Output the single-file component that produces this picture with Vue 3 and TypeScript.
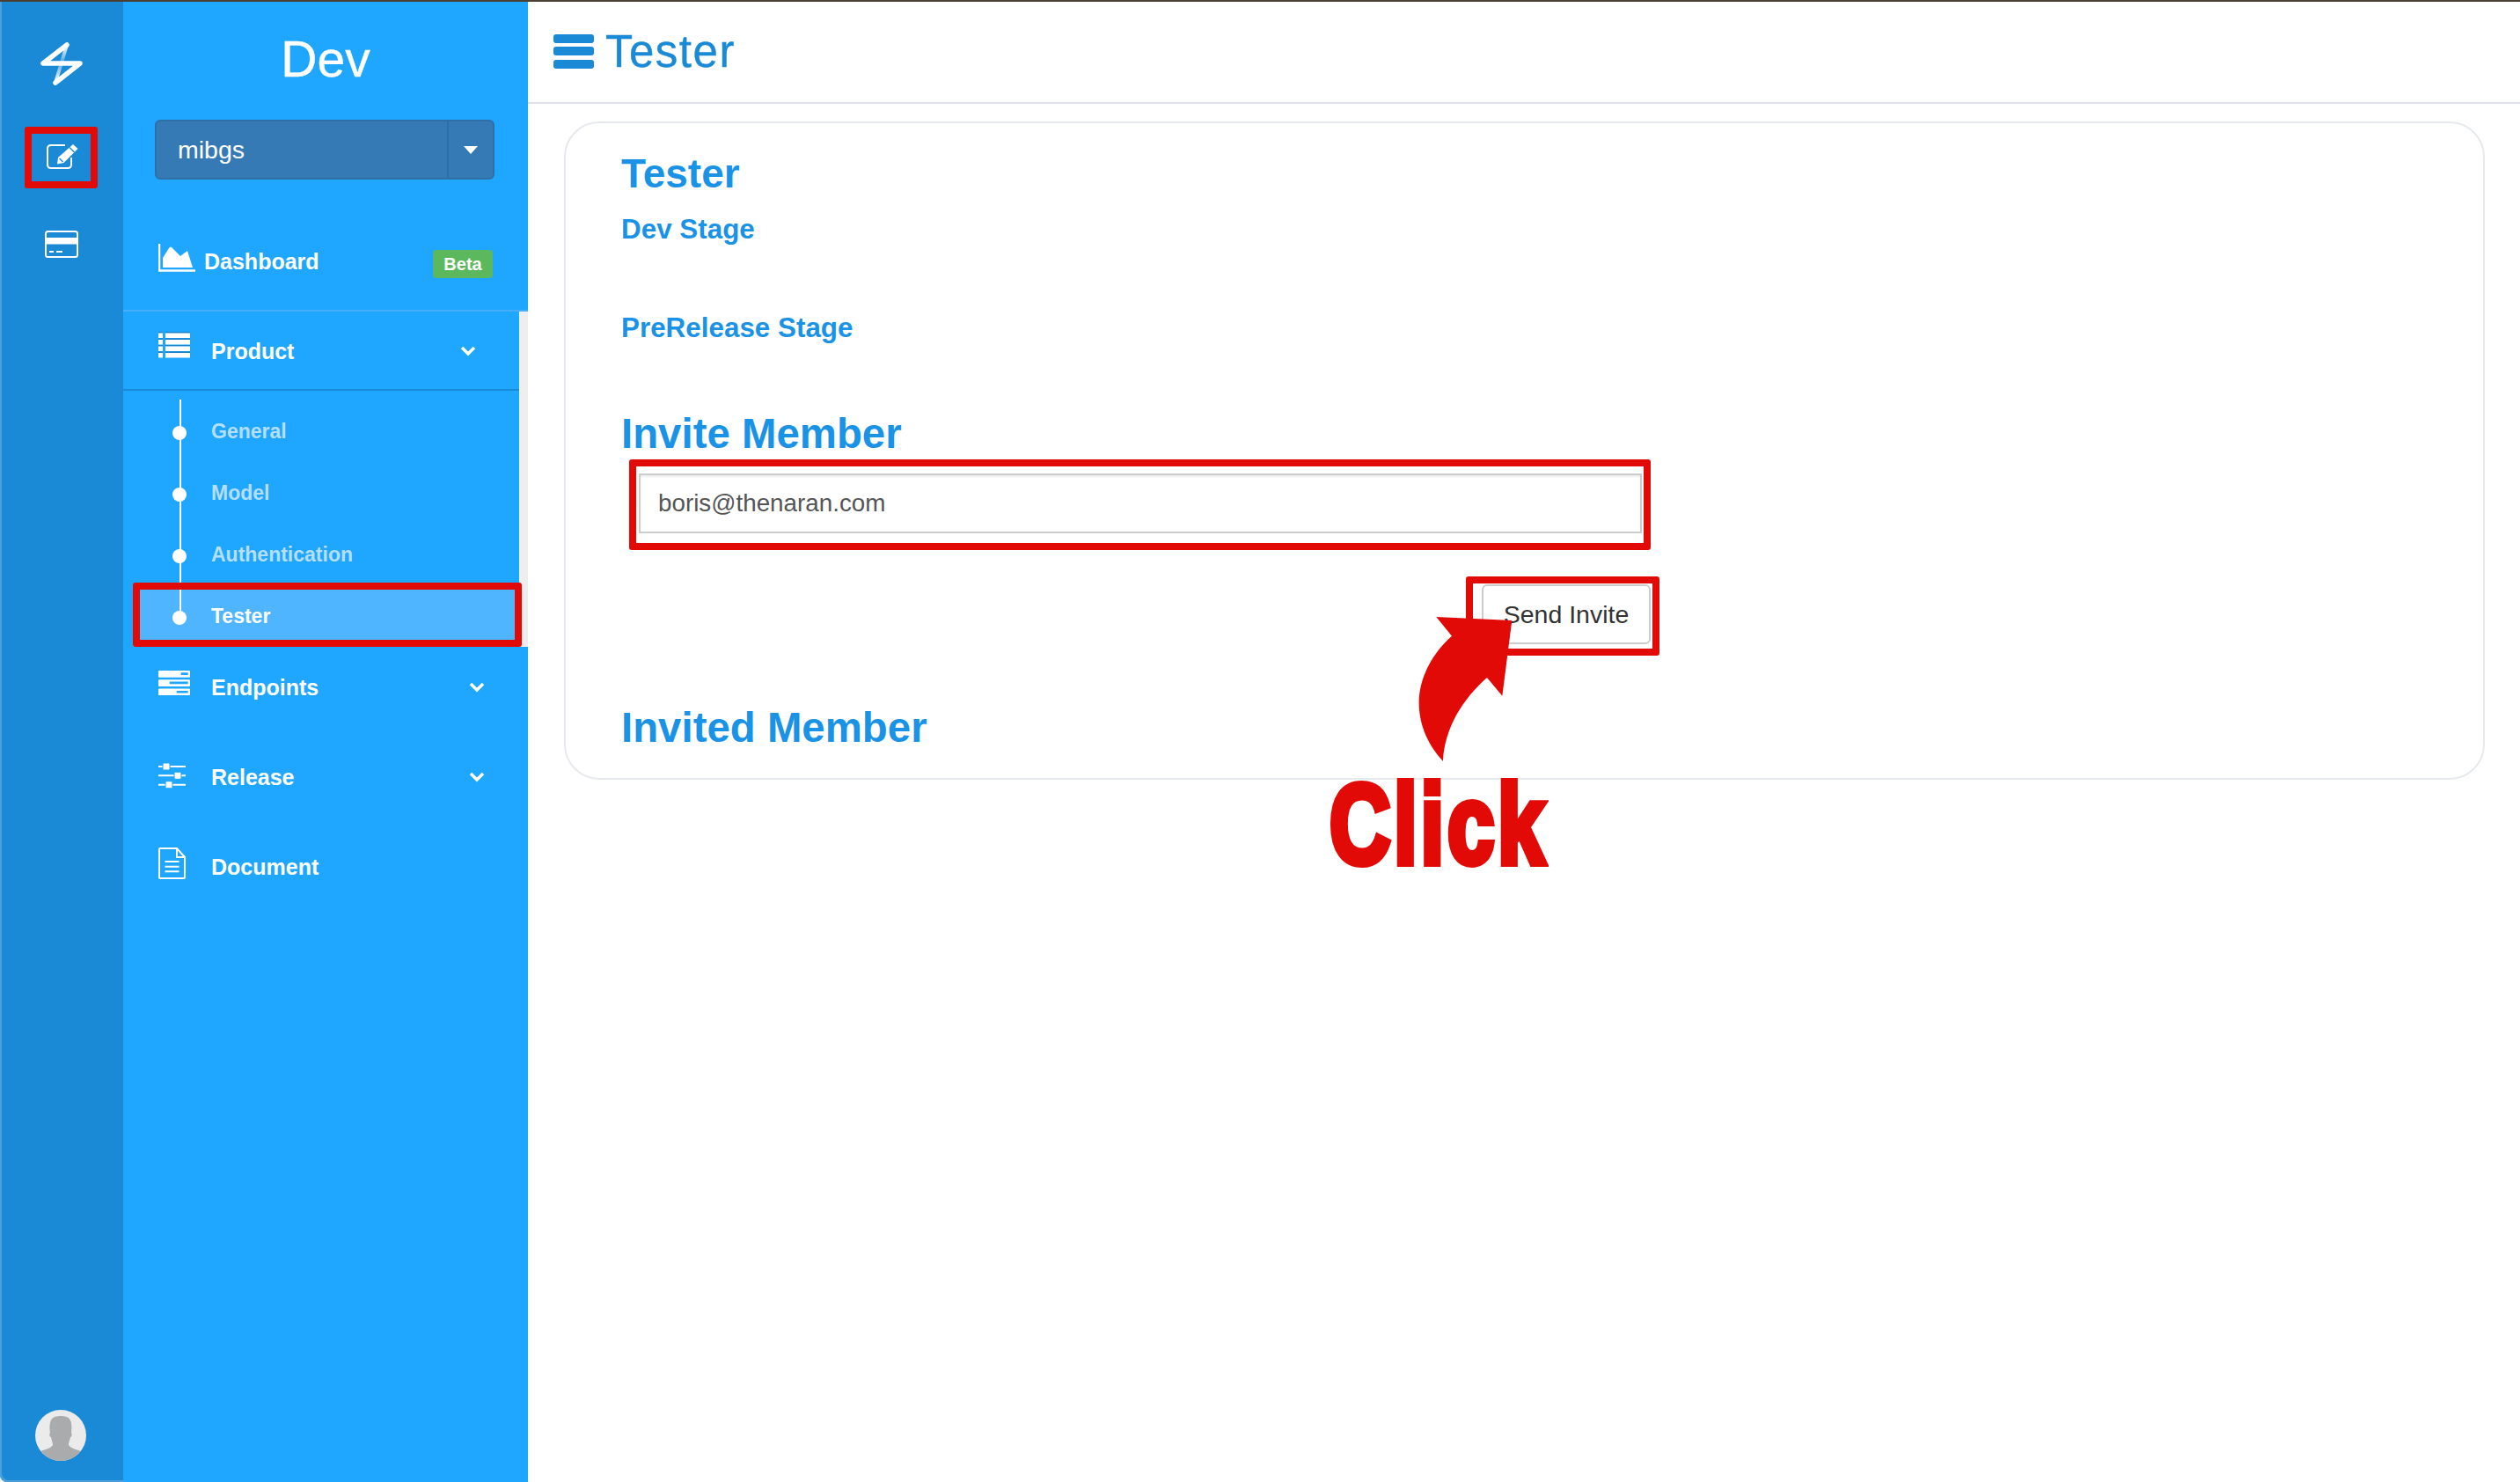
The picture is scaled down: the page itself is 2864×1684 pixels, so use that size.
<template>
  <div class="screen">
    <aside class="rail">
      <div class="rail__logo">
        <svg viewBox="0 0 50 50" width="50" height="50">
          <defs>
            <linearGradient id="logo-fade" x1="0" y1="0" x2="0" y2="1">
              <stop offset="0" stop-color="#fff" />
              <stop offset="0.45" stop-color="#fff" stop-opacity="0.25" />
              <stop offset="1" stop-color="#fff" />
            </linearGradient>
          </defs>
          <path d="M31 4 L18 47" fill="none" stroke="url(#logo-fade)" stroke-width="4" stroke-linecap="round" />
          <path d="M31 4 L4 25 H46 L18 47" fill="none" stroke="#fff" stroke-width="5.5" stroke-linejoin="round" stroke-linecap="round" />
        </svg>
      </div>
      <div class="rail__item rail__item--edit">
        <svg viewBox="0 0 37 29" width="37" height="29">
          <path d="M22 2 H6 Q2 2 2 6 V24 Q2 28 6 28 H25 Q29 28 29 24 V16" fill="none" stroke="#fff" stroke-width="2" />
          <path d="M31 1 L36.5 6 L20.5 22 L13 23.5 L14 16 Z" fill="#fff" />
          <path d="M27 4.5 L32.5 10 M15.5 17 L19.5 21" stroke="#1a8ad6" stroke-width="1.4" />
        </svg>
      </div>
      <div class="rail__item rail__item--card">
        <svg viewBox="0 0 38 31" width="38" height="31">
          <rect x="1" y="1" width="36" height="29" rx="2.5" fill="none" stroke="#fff" stroke-width="2" />
          <rect x="1" y="8" width="36" height="7.5" fill="#fff" />
          <path d="M5 24 H10 M13 24 H20" stroke="#fff" stroke-width="2" />
        </svg>
      </div>
      <div class="rail__avatar">
        <svg viewBox="0 0 58 58" width="58" height="58">
          <clipPath id="avatar-clip"><circle cx="29" cy="29" r="29" /></clipPath>
          <circle cx="29" cy="29" r="29" fill="#ebebeb" />
          <path clip-path="url(#avatar-clip)" d="M17 26 C15 10 20 7 29 7 C38 7 43 10 41 26 C42 27 42 31 40 31 C39 36 38 37 38 40 C40 44 48 45 54 48 V58 H4 V48 C10 45 18 44 20 40 C20 37 19 36 18 31 C16 31 16 27 17 26 Z" fill="#a9abad" />
        </svg>
      </div>
    </aside>

    <nav class="side">
      <h1 class="side__title">Dev</h1>
      <div class="picker">
        <span class="picker__value">mibgs</span>
        <span class="picker__toggle"><i class="picker__caret"></i></span>
      </div>

      <div class="side__dash">
        <svg class="side__dash-icon" viewBox="0 0 42 32" width="42" height="32">
          <path d="M1 0 V30.5 H42" fill="none" stroke="#fff" stroke-width="2.5" />
          <path d="M5 27 V16 L12 5 Q14 2 16 5 L25 14 L33 8 L39 27 Z" fill="#fff" />
        </svg>
        <span class="side__dash-label">Dashboard</span>
        <span class="badge">Beta</span>
      </div>

      <div class="product">
        <div class="product__head">
          <svg class="nav-icon nav-icon--list" viewBox="0 0 36 30" width="36" height="30">
            <g v-for="y in listRows" :key="y">
              <path :d="`M0 ${y} H5 V${y + 1.5} H0 Z M8 ${y} H36 V${y + 1.5} H8 Z`" fill="#1a7fc8" />
              <path :d="`M0 ${y + 1.5} H5 V${y + 7} H0 Z M8 ${y + 1.5} H36 V${y + 7} H8 Z`" fill="#fff" />
            </g>
          </svg>
          <span class="nav-label">Product</span>
          <svg class="chevron chevron--product" viewBox="0 0 18 12" width="18" height="12">
            <path d="M2 2 L9 9 L16 2" fill="none" stroke="#fff" stroke-width="3.5" />
          </svg>
        </div>
        <ul class="steps">
          <li v-for="step in steps" :key="step.label" class="steps__row" :class="{ 'steps__row--on': step.active }">
            <i class="steps__dot"></i>
            <span>{{ step.label }}</span>
          </li>
        </ul>
      </div>

      <div class="nav-row nav-row--endpoints">
        <svg class="nav-icon nav-icon--server" viewBox="0 0 36 28" width="36" height="28">
          <path
            v-for="row in serverRows"
            :key="row.y"
            fill="#fff"
            fill-rule="evenodd"
            :d="`M1 ${row.y} H35 Q36 ${row.y} 36 ${row.y + 1} V${row.y + 6.7} Q36 ${row.y + 7.7} 35 ${row.y + 7.7} H1 Q0 ${row.y + 7.7} 0 ${row.y + 6.7} V${row.y + 1} Q0 ${row.y} 1 ${row.y} Z M${row.cut} ${row.y + 2.3} V${row.y + 5} H33.7 V${row.y + 2.3} Z`"
          />
        </svg>
        <span class="nav-label">Endpoints</span>
        <svg class="chevron" viewBox="0 0 18 12" width="18" height="12">
          <path d="M2 2 L9 9 L16 2" fill="none" stroke="#fff" stroke-width="3.5" />
        </svg>
      </div>
      <div class="nav-row">
        <svg class="nav-icon nav-icon--sliders" viewBox="0 0 32 29" width="32" height="29">
          <path d="M0 4 H31 M0 14.3 H31 M0 24.7 H31" stroke="#fff" stroke-width="2" />
          <rect x="5" y="0" width="8" height="8" rx="1.5" fill="#fff" stroke="#1fa6ff" />
          <rect x="18" y="10.3" width="8" height="8" rx="1.5" fill="#fff" stroke="#1fa6ff" />
          <rect x="8" y="20.7" width="8" height="8" rx="1.5" fill="#fff" stroke="#1fa6ff" />
        </svg>
        <span class="nav-label">Release</span>
        <svg class="chevron" viewBox="0 0 18 12" width="18" height="12">
          <path d="M2 2 L9 9 L16 2" fill="none" stroke="#fff" stroke-width="3.5" />
        </svg>
      </div>
      <div class="nav-row">
        <svg class="nav-icon nav-icon--doc" viewBox="0 0 32 36" width="32" height="36">
          <path d="M1 2 Q1 1 2 1 H21 L30 11 V34 Q30 35 29 35 H2 Q1 35 1 34 Z M21 1 V11 H30" fill="none" stroke="#fff" stroke-width="2" />
          <path d="M7.5 16 H23.5 M7.5 21.7 H23.5 M7.5 27.3 H23.5" stroke="#fff" stroke-width="2" />
        </svg>
        <span class="nav-label">Document</span>
      </div>
    </nav>

    <main class="main">
      <header class="topbar">
        <span class="burger"><i></i><i></i><i></i></span>
        <span class="topbar__title">Tester</span>
      </header>
      <section class="card">
        <h2 class="card__title">Tester</h2>
        <h4 class="card__stage">Dev Stage</h4>
        <h4 class="card__stage card__stage--pre">PreRelease Stage</h4>
        <h3 class="card__section">Invite Member</h3>
        <div class="invite">
          <input class="invite__input" type="text" value="boris@thenaran.com" />
        </div>
        <div class="send">
          <button class="send__btn" type="button">Send Invite</button>
        </div>
        <h3 class="card__section card__section--invited">Invited Member</h3>
      </section>
    </main>

    <!-- tutorial annotations drawn over the page -->
    <div class="mark mark--rail"></div>
    <div class="mark mark--tester"></div>
    <div class="mark mark--input"></div>
    <div class="mark mark--send"></div>
    <svg class="arrow" viewBox="0 0 1380 1110" width="460" height="370">
      <path d="M517 213 L775 225 L742 482 L690 420 C610 490 545 590 540 705 C480 640 458 570 458 505 C458 420 505 335 570 278 Z" fill="#e20a07" />
    </svg>
    <span class="click">Click</span>
  </div>
</template>

<script setup lang="ts">
interface Step {
  label: string;
  active?: boolean;
}

const steps: Step[] = [
  { label: 'General' },
  { label: 'Model' },
  { label: 'Authentication' },
  { label: 'Tester', active: true },
];

const listRows = [0, 7.5, 15, 22.5];
const serverRows = [
  { y: 0, cut: 25.7 },
  { y: 10.3, cut: 12.7 },
  { y: 20.6, cut: 20.7 },
];
</script>

<style>
html,
body {
  margin: 0;
  background: #fff;
}
</style>

<style scoped>
.screen {
  position: relative;
  display: flex;
  width: 2864px;
  height: 1684px;
  overflow: hidden;
  background: #fff;
  font-family: "Liberation Sans", Arial, sans-serif;
  border-top: 2px solid #4a3f30;
  box-sizing: border-box;
}

h1, h2, h3, h4 {
  margin: 0;
}

.rail {
  display: flex;
  flex-direction: column;
  align-items: center;
  flex: none;
  width: 140px;
  background: #1a8ad6;
  box-shadow: inset 2px -2px 0 #4a9fdc;
  border-bottom-left-radius: 8px;
}

.rail__logo {
  height: 50px;
  margin-top: 45px;
}

.rail__item--edit {
  height: 29px;
  margin-top: 66px;
}

.rail__item--card {
  height: 31px;
  margin-top: 70px;
}

.rail__avatar {
  height: 58px;
  margin: auto 2px 24px 0;
}

.side {
  flex: none;
  width: 460px;
  background: #1fa6ff;
  color: #fff;
}

.side__title {
  margin-top: 31px;
  font-size: 57px;
  font-weight: 400;
  line-height: 68px;
  text-align: center;
  -webkit-text-stroke: 0.4px #fff;
}

.picker {
  display: flex;
  align-items: center;
  width: 386px;
  height: 68px;
  box-sizing: border-box;
  margin: 35px 0 0 36px;
  background: #3579b5;
  border: 2px solid #2f6fa8;
  border-radius: 6px;
}

.picker__value {
  flex: 1;
  padding-left: 24px;
  font-size: 28.5px;
}

.picker__toggle {
  display: flex;
  align-items: center;
  justify-content: center;
  width: 50px;
  height: 100%;
  border-left: 2px solid #2f6fa8;
}

.picker__caret {
  width: 0;
  height: 0;
  border-top: 9px solid #fff;
  border-left: 8px solid transparent;
  border-right: 8px solid transparent;
}

.side__dash {
  display: flex;
  align-items: center;
  height: 150px;
  box-sizing: border-box;
  padding: 38px 40px 0;
  border-bottom: 2px solid #47aeff;
}

.side__dash-icon {
  margin-top: -8px;
}

.side__dash-label {
  margin-left: 10px;
  font-size: 25px;
  font-weight: 700;
}

.badge {
  margin: 6px 0 0 auto;
  width: 68px;
  height: 32px;
  line-height: 32px;
  text-align: center;
  font-size: 20px;
  font-weight: 700;
  background: #5cb85c;
  border-radius: 4px;
}

.product {
  border-right: 10px solid #eeeeee;
}

.product__head {
  display: grid;
  grid-template-columns: 60px 1fr auto;
  align-items: center;
  height: 90px;
  box-sizing: border-box;
  padding: 2px 40px 0;
  border-bottom: 2px solid #1a8ad6;
}

.nav-icon--list {
  margin-top: -14px;
}

.nav-icon--server {
  margin-top: -10px;
}

.nav-icon--sliders {
  margin-top: -4px;
}

.nav-icon--doc {
  margin-top: -8px;
}

.nav-label {
  font-size: 25px;
  font-weight: 700;
}

.chevron--product {
  margin-right: 9px;
}

.steps {
  position: relative;
  margin: 0;
  padding: 11px 0 0;
  list-style: none;
}

.steps::before {
  content: "";
  position: absolute;
  left: 64px;
  top: 10px;
  width: 2px;
  height: 246px;
  background: #fff;
}

.steps__row {
  position: relative;
  height: 70px;
  padding-left: 100px;
  line-height: 70px;
  font-size: 23px;
  font-weight: 700;
  color: #b5dfff;
}

.steps__row span {
  position: relative;
}

.steps__row--on {
  color: #fff;
  margin-left: 11px;
  padding-left: 89px;
  background: #4fb5ff;
}

.steps__row--on::before {
  content: "";
  position: absolute;
  left: 53px;
  top: 0;
  width: 2px;
  height: 35px;
  background: #fff;
}

.steps__dot {
  position: absolute;
  left: 56px;
  top: 29px;
  width: 16px;
  height: 16px;
  border-radius: 50%;
  background: #fff;
}

.steps__row--on .steps__dot {
  left: 45px;
}

.nav-row {
  display: grid;
  grid-template-columns: 60px 1fr auto;
  align-items: center;
  height: 102px;
  box-sizing: border-box;
  padding: 0 49px 0 40px;
}

.nav-row--endpoints {
  height: 92px;
  margin-bottom: 5px;
}

.main {
  flex: 1;
  min-width: 0;
}

.topbar {
  display: flex;
  align-items: center;
  height: 116px;
  box-sizing: border-box;
  padding: 0 0 2px 29px;
  border-bottom: 2px solid #dde0e8;
}

.burger {
  display: flex;
  flex-direction: column;
  gap: 4.5px;
  width: 46px;
}

.burger i {
  height: 10px;
  border-radius: 3px;
  background: #1a8ad6;
}

.topbar__title {
  margin-left: 13px;
  font-size: 51px;
  letter-spacing: 1.5px;
  color: #1a8ad6;
  -webkit-text-stroke: 0.4px #1a8ad6;
}

.card {
  width: 2183px;
  height: 748px;
  box-sizing: border-box;
  margin: 20px 0 0 41px;
  padding: 32px 0 0 63px;
  border: 2px solid #e6e9ee;
  border-radius: 40px;
  color: #1a93e6;
}

.card__title {
  font-size: 46px;
  line-height: 50px;
  font-weight: 700;
}

.card__stage {
  margin-top: 19px;
  font-size: 31.4px;
  line-height: 40px;
  font-weight: 700;
}

.card__stage--pre {
  margin-top: 72px;
}

.card__section {
  margin-top: 72px;
  font-size: 47.4px;
  line-height: 56px;
  font-weight: 700;
}

.invite {
  margin: 17px 0 0 20px;
  width: 1140px;
}

.invite__input {
  display: block;
  width: 100%;
  height: 68px;
  box-sizing: border-box;
  padding: 0 20px;
  font-family: inherit;
  font-size: 27.8px;
  color: #555;
  background: #fff;
  border: 2px solid #ccc;
  box-shadow: inset 0 2px 2px rgba(0, 0, 0, 0.08);
  outline: none;
}

.send {
  display: flex;
  justify-content: flex-end;
  width: 1170px;
  margin-top: 58px;
}

.send__btn {
  width: 192px;
  height: 68px;
  padding: 0;
  font-family: inherit;
  font-size: 28.5px;
  color: #333;
  background: #fff;
  border: 2px solid #ccc;
  border-radius: 6px;
}

.card__section--invited {
  margin-top: 67px;
}

.mark {
  position: absolute;
  box-sizing: border-box;
  border: 8px solid #e20a07;
  border-radius: 3px;
}

.mark--rail {
  left: 28px;
  top: 142px;
  width: 83px;
  height: 70px;
}

.mark--tester {
  left: 151px;
  top: 660px;
  width: 442px;
  height: 73px;
}

.mark--input {
  left: 715px;
  top: 520px;
  width: 1161px;
  height: 103px;
}

.mark--send {
  left: 1666px;
  top: 653px;
  width: 220px;
  height: 90px;
}

.arrow {
  position: absolute;
  left: 1460px;
  top: 628px;
}

.click {
  position: absolute;
  left: 1511px;
  top: 871px;
  font-size: 128px;
  line-height: 128px;
  font-weight: 700;
  letter-spacing: 5px;
  color: #e20a07;
  -webkit-text-stroke: 8px #e20a07;
  transform: scaleX(0.75);
  transform-origin: left top;
}
</style>
